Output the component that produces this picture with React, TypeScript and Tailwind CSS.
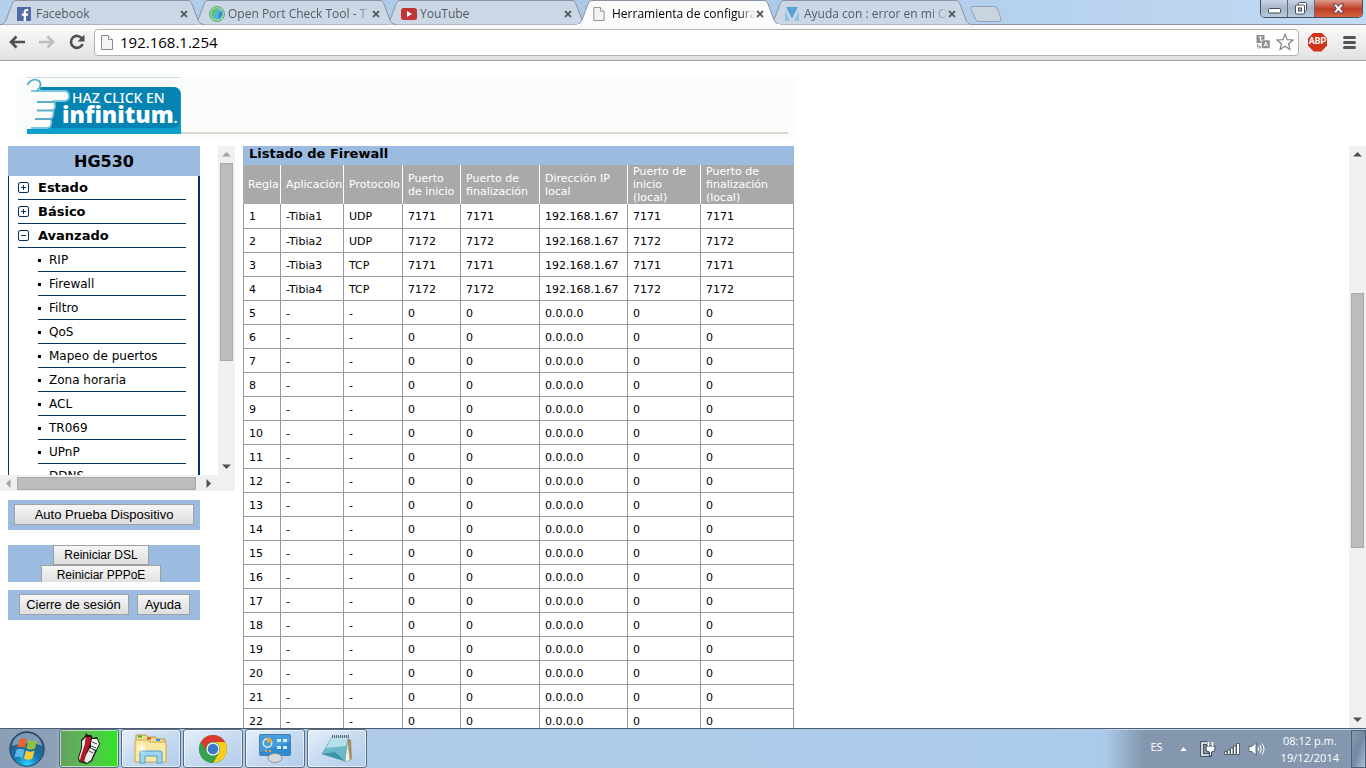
import { ReactNode } from "react";
import clsx from "clsx";
import { FaFacebookF } from "react-icons/fa";

type Tab = {
  title: string;
  icon: ReactNode;
  z: string;
  active?: boolean;
};

type Rule = {
  app: string;
  protocol: string;
  port: string;
  ip: string;
};

function PageIcon({ className }: { className?: string }) {
  return (
    <svg viewBox="0 0 12 15" className={className} aria-hidden="true">
      <path d="M0.5 0.5H7.5L11.5 4.5V14.5H0.5Z" fill="#f4f4f4" stroke="#8b8b8b" />
      <path d="M7.5 0.5V4.5H11.5" fill="#fff" stroke="#8b8b8b" />
    </svg>
  );
}

function FacebookIcon() {
  return (
    <span className="flex h-3.5 w-3.5 items-end justify-end bg-[#5069a8] text-white">
      <FaFacebookF size={12} />
    </span>
  );
}

function GlobeIcon() {
  return (
    <svg viewBox="0 0 16 16" className="h-4 w-4" aria-hidden="true">
      <circle cx="8" cy="8" r="7.5" fill="#9fdc9f" stroke="#5fae6c" />
      <circle cx="8" cy="8" r="5.8" fill="#58b7d9" />
      <path d="M3 5C5 2 8 2 10 3L8 6L5 8L6 11L4 12C2 10 2 7 3 5Z" fill="#62c178" />
      <path d="M10 6L13 5C14 8 13 11 10 13L9 10Z" fill="#3a8fc8" />
    </svg>
  );
}

function YoutubeIcon() {
  return (
    <svg viewBox="0 0 16 12" className="h-3 w-4" aria-hidden="true">
      <rect width="16" height="12" rx="2.5" fill="#c03636" />
      <path d="M6 3V9L11 6Z" fill="#fff" />
    </svg>
  );
}

function TriangleIcon() {
  return (
    <svg viewBox="0 0 13 13" className="h-3.5 w-3.5" aria-hidden="true">
      <path d="M1 0H12L6.5 11Z" fill="#56a3d8" />
      <path d="M0 3L4.5 13H0ZM13 3L8.5 13H13Z" fill="#8fc0e2" />
    </svg>
  );
}

const tabs: Tab[] = [
  { title: "Facebook", icon: <FacebookIcon />, z: "z-40" },
  { title: "Open Port Check Tool - T", icon: <GlobeIcon />, z: "z-30" },
  { title: "YouTube", icon: <YoutubeIcon />, z: "z-20" },
  {
    title: "Herramienta de configura",
    icon: <PageIcon className="h-3.5 w-3" />,
    z: "z-50",
    active: true,
  },
  { title: "Ayuda con : error en mi O", icon: <TriangleIcon />, z: "z-10" },
];

const submenu = [
  "RIP",
  "Firewall",
  "Filtro",
  "QoS",
  "Mapeo de puertos",
  "Zona horaria",
  "ACL",
  "TR069",
  "UPnP",
  "DDNS",
];

const rules: Rule[] = [
  { app: "-Tibia1", protocol: "UDP", port: "7171", ip: "192.168.1.67" },
  { app: "-Tibia2", protocol: "UDP", port: "7172", ip: "192.168.1.67" },
  { app: "-Tibia3", protocol: "TCP", port: "7171", ip: "192.168.1.67" },
  { app: "-Tibia4", protocol: "TCP", port: "7172", ip: "192.168.1.67" },
  ...Array.from({ length: 18 }, () => ({
    app: "-",
    protocol: "-",
    port: "0",
    ip: "0.0.0.0",
  })),
];

const columns = [
  { label: "Regla", width: "w-[38px]" },
  { label: "Aplicación", width: "w-[63px]" },
  { label: "Protocolo", width: "w-[59px]" },
  { label: "Puerto de inicio", width: "w-[58px]" },
  { label: "Puerto de finalización", width: "w-[79px]" },
  { label: "Dirección IP local", width: "w-[88px]" },
  { label: "Puerto de inicio (local)", width: "w-[73px]" },
  { label: "Puerto de finalización (local)", width: "w-[93px]" },
];

function BrowserTab({ tab }: { tab: Tab }) {
  return (
    <div
      className={clsx(
        "relative -mr-3.5 flex h-[25px] w-[206px] shrink-0 items-center pt-0.5 pr-4 pl-[17px]",
        tab.z
      )}
    >
      <svg viewBox="0 0 206 25" className="absolute inset-0 h-full w-full" aria-hidden="true">
        <path
          d="M1 24.5C4 24 5 22 6 20L12 4C13 1.5 14 0.5 17 0.5H187C190 0.5 191 1.5 192 4L198 20C199 22 200 24 204 24.5"
          fill={tab.active ? "#fbfbfb" : "#ccd7e5"}
          stroke="#8994a3"
        />
        {tab.active && <path d="M1 24.5H204" stroke="#fbfbfb" />}
      </svg>
      <span className="relative flex w-[19px] shrink-0">{tab.icon}</span>
      <span
        className={clsx(
          "relative w-[144px] text-xs whitespace-nowrap",
          tab.title.length > 20 &&
            "[mask-image:linear-gradient(to_right,#000_88%,transparent)]",
          tab.active ? "text-black" : "text-[#555b64]"
        )}
      >
        {tab.title}
      </span>
      <button type="button" aria-label="Cerrar pestaña" className="relative">
        <svg viewBox="0 0 8 8" className="h-2 w-2">
          <path d="M1 1L7 7M7 1L1 7" stroke="#5a5d63" strokeWidth="1.8" />
        </svg>
      </button>
    </div>
  );
}

function WindowButtons() {
  return (
    <div className="mr-[3px] ml-auto flex h-[18px] w-[103px] overflow-hidden rounded-b-[5px] border border-t-0 border-[#3f4d60]">
      <button
        type="button"
        aria-label="Minimizar"
        className="flex flex-1 items-center justify-center border-r border-[#5c6b80] bg-linear-to-b from-[#c9d5e4] via-[#a5b4c7] to-[#b9cbe0]"
      >
        <svg viewBox="0 0 13 6" className="mt-1 h-1.5 w-[13px]">
          <rect x="0.5" y="0.5" width="12" height="4.5" rx="1" fill="#fff" stroke="#454d5b" />
        </svg>
      </button>
      <button
        type="button"
        aria-label="Restaurar"
        className="flex flex-1 items-center justify-center border-r border-[#5c6b80] bg-linear-to-b from-[#c9d5e4] via-[#a5b4c7] to-[#b9cbe0]"
      >
        <svg viewBox="0 0 13 13" className="h-[13px] w-[13px]">
          <rect x="3.5" y="0.5" width="8" height="8" rx="1" fill="#fff" stroke="#454d5b" />
          <rect x="0.5" y="3" width="9" height="9" rx="1" fill="#fff" stroke="#454d5b" />
          <rect x="3.5" y="6" width="3" height="3" fill="#a5b4c7" stroke="#454d5b" />
        </svg>
      </button>
      <button
        type="button"
        aria-label="Cerrar"
        className="flex w-[47px] items-center justify-center bg-linear-to-b from-[#dd9a8c] via-[#bf3c26] to-[#d9633f]"
      >
        <svg viewBox="0 0 13 11" className="h-[11px] w-[13px]">
          <path
            d="M1 1H4.5L6.5 3.4L8.5 1H12L8.6 5.5L12 10H8.5L6.5 7.6L4.5 10H1L4.4 5.5Z"
            fill="#fff"
            stroke="#57384a"
          />
        </svg>
      </button>
    </div>
  );
}

function Toolbar() {
  return (
    <div className="flex h-9 shrink-0 items-center border-b border-[#a0a0a0] bg-linear-to-b from-[#fafafa] to-[#e2e2e2] pr-2 pb-px pl-2">
      <button type="button" aria-label="Atrás" className="mr-3">
        <svg viewBox="0 0 18 16" className="h-4 w-[18px]">
          <path d="M8.5 2.5L3 8L8.5 13.5M3 8H17" fill="none" stroke="#505050" strokeWidth="2.6" />
        </svg>
      </button>
      <button type="button" aria-label="Adelante" className="mr-3">
        <svg viewBox="0 0 18 16" className="h-4 w-[18px]">
          <path d="M9.5 2.5L15 8L9.5 13.5M15 8H1" fill="none" stroke="#bdbdbd" strokeWidth="2.6" />
        </svg>
      </button>
      <button type="button" aria-label="Recargar" className="mr-2">
        <svg viewBox="0 0 16 16" className="h-4 w-[18px]">
          <path d="M13 4.6A6 6 0 1 0 13.6 10" fill="none" stroke="#505050" strokeWidth="2.6" />
          <path d="M15.5 0.5V7.5H8.5Z" fill="#505050" />
        </svg>
      </button>
      <div className="flex h-[27px] flex-1 items-center rounded-sm border border-[#b3b3b3] bg-white pr-1 pl-1.5">
        <PageIcon className="mr-[7px] h-[15px] w-3" />
        <input
          type="text"
          aria-label="Dirección"
          defaultValue="192.168.1.254"
          className="min-w-0 flex-1 bg-transparent text-[15px] leading-5 text-black outline-none"
        />
        <button type="button" aria-label="Traducir" className="mr-1.5">
          <svg viewBox="0 0 14 14" className="h-3.5 w-3.5">
            <rect x="0.5" y="0" width="8" height="8" fill="#8c8c8c" />
            <path d="M2.5 2H6.5M4.5 2V6" stroke="#fff" />
            <rect x="5.5" y="5" width="8.5" height="8.5" fill="#8c8c8c" stroke="#fff" strokeWidth="0.6" />
            <path d="M8 11.5L9.8 7L11.6 11.5M8.6 10H11" fill="none" stroke="#fff" />
            <path d="M1.5 9V12H4.5M3 10.3L4.7 12L3 13.7" fill="none" stroke="#8c8c8c" />
          </svg>
        </button>
        <button type="button" aria-label="Marcador">
          <svg viewBox="0 0 20 20" className="h-5 w-[18px]">
            <path
              d="M10 1.5L12.4 7.4L18.8 7.8L13.9 11.9L15.5 18.2L10 14.7L4.5 18.2L6.1 11.9L1.2 7.8L7.6 7.4Z"
              fill="#fff"
              stroke="#808080"
              strokeWidth="1.3"
            />
          </svg>
        </button>
      </div>
      <button
        type="button"
        className="ml-[9px] flex h-[19px] w-[19px] items-center justify-center bg-[#d0351b] font-['Roboto',sans-serif] text-[9px] font-bold text-white [clip-path:polygon(30%_0,70%_0,100%_30%,100%_70%,70%_100%,30%_100%,0_70%,0_30%)]"
      >
        ABP
      </button>
      <button type="button" aria-label="Menú" className="mr-0.5 ml-4 flex w-[13px] flex-col gap-0.5">
        <span className="h-[3px] rounded-sm bg-[#555]" />
        <span className="h-[3px] rounded-sm bg-[#555]" />
        <span className="h-[3px] rounded-sm bg-[#555]" />
      </button>
    </div>
  );
}

function Arrow({ dir, muted }: { dir: "up" | "down" | "left" | "right"; muted?: boolean }) {
  const paths = {
    up: "M4.5 2L9 6.5H0Z",
    down: "M4.5 7L0 2.5H9Z",
    left: "M2 4.5L6.5 0V9Z",
    right: "M7 4.5L2.5 0V9Z",
  };
  return (
    <span className="flex h-[17px] w-[17px] shrink-0 items-center justify-center">
      <svg viewBox="0 0 9 9" className="h-[9px] w-[9px]" aria-hidden="true">
        <path d={paths[dir]} fill={muted ? "#a3a3a3" : "#505050"} />
      </svg>
    </span>
  );
}

function Banner() {
  return (
    <header className="mt-4 ml-4 flex h-[61px] w-[780px] items-start bg-[#fafcf9] pl-[11px] font-['Open_Sans',sans-serif]">
      <a href="#infinitum" className="relative block h-14 w-[154px] shrink-0 border-t border-[#cfdfee] pt-2">
        <svg viewBox="0 0 154 56" className="absolute inset-0 h-14 w-[154px]" aria-hidden="true">
          <path d="M0 9H146Q154 9 154 17V56H0Z" fill="#0aa0cb" />
          <path d="M14 9H146Q153 9 153 17V42Q153 50 145 50H14Z" fill="#0583b2" />
          <path d="M0 8H13V16H0Z" fill="#fafcf9" />
          <path
            d="M0 13H37Q42 13 42 18Q42 23 37 23H26Q28 24 28 28Q28 31 26 32Q27 33 26 37Q26 40 23 41Q25 42 24 46Q24 50 19 50H0Z"
            fill="#fafcf9"
            stroke="#7cc7de"
            strokeWidth="1.8"
          />
          <path d="M-2 12H4V51H-2Z" fill="#fafcf9" />
          <path d="M0 7C3 2 8 0 12 3C15 6 13 10 10 13" fill="none" stroke="#5bacc9" strokeWidth="1.8" />
          <path d="M10 24H27M10 32.500H26M8 41H24" stroke="#5bacc9" strokeWidth="2" />
        </svg>
        <span className="relative block pt-1 pl-[45px] font-['Noto_Sans',sans-serif] text-[14px] leading-4 font-medium whitespace-nowrap text-white">
          HAZ CLICK EN
        </span>
        <span className="relative block pl-[35px] text-[23px] leading-4 font-extrabold whitespace-nowrap text-white">
          infinitum<span className="text-xs">.</span>
        </span>
      </a>
      <div className="mr-2 h-[57px] flex-1 border-b-2 border-[#d8d6d2]" />
    </header>
  );
}

function ToggleIcon({ open }: { open?: boolean }) {
  return (
    <svg viewBox="0 0 11 11" className="h-[11px] w-[11px]" aria-hidden="true">
      <rect x="0.5" y="0.5" width="10" height="10" rx="1.5" fill="#fff" stroke="#003366" />
      <path d={open ? "M3 5.5H8" : "M3 5.5H8M5.5 3V8"} stroke="#003366" />
    </svg>
  );
}

function SideMenu() {
  return (
    <div className="h-[345px] w-[235px] bg-[#f0f0f0]">
      <div className="flex h-[329px]">
        <nav className="flex-1 overflow-hidden bg-white pl-2">
          <h1 className="h-[30px] w-48 bg-[#9bbbe1] text-center text-base leading-8 font-bold">
            HG530
          </h1>
          <ul className="w-48 border-r-2 border-l border-[#003366] pr-3 pl-[9px]">
            {["Estado", "Básico", "Avanzado"].map((item) => (
              <li key={item} className="h-6 border-b border-[#003366]">
                <a href={`#${item}`} className="flex items-center gap-[9px] text-[13px] leading-[23px] font-bold">
                  <ToggleIcon open={item === "Avanzado"} />
                  {item}
                </a>
              </li>
            ))}
            {submenu.map((item) => (
              <li key={item} className="ml-5 h-6 border-b border-[#003366]">
                <a href={`#${item}`} className="flex items-center gap-2 text-xs leading-6">
                  <span className="h-[3px] w-[3px] bg-black" />
                  {item}
                </a>
              </li>
            ))}
          </ul>
        </nav>
        <div className="flex w-[17px] flex-col">
          <Arrow dir="up" muted />
          <div className="mx-0.5 h-[198px] border border-[#a8a8a8] bg-[#bcbcbc]" />
          <div className="flex-1" />
          <Arrow dir="down" />
        </div>
      </div>
      <div className="flex h-4 items-center">
        <Arrow dir="left" muted />
        <div className="h-[13px] w-[179px] border border-[#a8a8a8] bg-[#bcbcbc]" />
        <span className="ml-1">
          <Arrow dir="right" />
        </span>
      </div>
    </div>
  );
}

function FormButton({ children, className }: { children: ReactNode; className?: string }) {
  return (
    <button
      type="button"
      className={clsx(
        "shrink-0 border border-[#a0a0a0] bg-linear-to-b from-[#f6f6f6] to-[#dedede] font-['Liberation_Sans',Arial,sans-serif] whitespace-nowrap text-black",
        className
      )}
    >
      {children}
    </button>
  );
}

function RulesTable() {
  return (
    <section className="w-[551px]">
      <h2 className="h-[19px] bg-[#9bbbe1] pl-1.5 text-[13px] leading-4 font-bold">
        Listado de Firewall
      </h2>
      <table className="w-[551px] table-fixed border-separate border-spacing-0 text-left text-[11px]">
        <thead>
          <tr>
            {columns.map((col) => (
              <th
                key={col.label}
                scope="col"
                className={clsx(
                  "h-[39px] border-r border-white bg-[#a9a9a9] py-0 pr-1 pl-[5px] leading-[13px] font-normal text-white last:border-[#a9a9a9]",
                  col.width
                )}
              >
                {col.label}
              </th>
            ))}
          </tr>
        </thead>
        <tbody>
          {rules.map((rule, i) => (
            <tr key={i} className={i === 0 ? "h-[25px]" : "h-6"}>
              {[
                i + 1,
                rule.app,
                rule.protocol,
                rule.port,
                rule.port,
                rule.ip,
                rule.port,
                rule.port,
              ].map((value, j) => (
                <td
                  key={j}
                  className="border-r border-b border-[#999] px-0 pt-0.5 pb-0 pl-[5px] leading-4 first:border-l"
                >
                  {value}
                </td>
              ))}
            </tr>
          ))}
        </tbody>
      </table>
    </section>
  );
}

function StartOrb() {
  return (
    <svg viewBox="0 0 36 36" className="h-9 w-9" aria-hidden="true">
      <defs>
        <radialGradient id="orb" cx="50%" cy="95%" r="85%">
          <stop offset="0" stopColor="#26d4ff" />
          <stop offset="0.45" stopColor="#1672ad" />
          <stop offset="1" stopColor="#32557c" />
        </radialGradient>
      </defs>
      <circle cx="18" cy="18" r="17.2" fill="url(#orb)" stroke="#263f5c" />
      <path d="M3 15C4 7 11 2 18 2S32 7 33 15C25 11 12 12 3 15Z" fill="#a9c0d6" opacity="0.65" />
      <path d="M11 8C13 7 15 7 18 8.5L16 17C13 15.5 11 15.5 8 16.5Z" fill="#ea6430" />
      <path d="M19.5 9C22 10.5 25 10.5 28 9L26 17.5C23 19 20 19 17.5 17.5Z" fill="#91c13f" />
      <path d="M7.5 18.5C10 17.5 13 17.5 15.5 19L13.5 27C11 25.5 8 25.5 5.5 26.5Z" fill="#5bb7ec" />
      <path d="M17 19.5C20 21 23 21 25.5 19.5L23.5 27.5C21 29 17 29 15 27.5Z" fill="#fbc934" />
    </svg>
  );
}

function MouseIcon() {
  return (
    <svg viewBox="0 0 32 34" className="h-[34px] w-8" aria-hidden="true">
      <path d="M8 8L12 4L13 1L15 3L18 3L20 6L24 5L27 12L25 16L19 29L14 32L6 30L5 26L8 16Z" fill="#1f1a1a" />
      <path d="M9 9L13 5L12 12L8 25L7 29L6 26L9 16Z" fill="#e8e8e8" />
      <path d="M13 5L18 5L17 12L12 24L10 30L7 29L8 24L12 13Z" fill="#c01425" />
      <path d="M19 7L24 7L26 12L23 18L18 16L18 11Z" fill="#f4f4f4" />
      <path d="M17 16L22 19L18 28L14 31L11 29L13 23Z" fill="#ececec" />
      <path d="M19 10L24 12M18 14L23 16M16 19L20 21" stroke="#444" />
    </svg>
  );
}

function ExplorerIcon() {
  return (
    <svg viewBox="0 0 34 32" className="h-8 w-[34px]" aria-hidden="true">
      <path d="M2 5V2H12L14 4H22V6H31V28H2Z" fill="#f5dd8b" stroke="#b99b45" />
      <path d="M2 7H13L16 9H32V29H1V8Z" fill="#f9e7a4" stroke="#c8a850" />
      <rect x="4" y="2.5" width="4" height="2" fill="#35b54a" />
      <rect x="13" y="4.5" width="4" height="2" fill="#d84635" />
      <rect x="22" y="6" width="4" height="2" fill="#2f92d8" />
      <path d="M6 30V20Q6 18 8 18H26Q28 18 28 20V30H23V23H11V30Z" fill="#9bd5f0" stroke="#4f9fcb" />
      <path d="M8 10V20M3 15H13M5 12L11 18M11 12L5 18" stroke="#fff" strokeWidth="0.9" />
    </svg>
  );
}

function ChromeIcon() {
  return (
    <svg viewBox="0 0 30 30" className="h-[30px] w-[30px]" aria-hidden="true">
      <circle cx="15" cy="15" r="14" fill="#2fa24a" />
      <path d="M2.9 8A14 14 0 0 1 27.1 8H15A7 7 0 0 0 8.9 18.5Z" fill="#dc3a30" />
      <path d="M27.1 8A14 14 0 0 1 15 29L21.1 18.5A7 7 0 0 0 15 8Z" fill="#fccd17" />
      <path d="M2.9 8A14 14 0 0 0 15 29L21.1 18.5A7 7 0 0 1 8.9 18.5Z" fill="#35a14b" />
      <circle cx="15" cy="15" r="6.6" fill="#f6f6f6" />
      <circle cx="15" cy="15" r="5.3" fill="#3a78c8" />
    </svg>
  );
}

function ControlPanelIcon() {
  return (
    <svg viewBox="0 0 32 29" className="h-[29px] w-8" aria-hidden="true">
      <rect x="0.5" y="0.5" width="31" height="21" rx="1" fill="#2e8ad0" stroke="#4c7fae" />
      <path d="M1 1H31V8L1 18Z" fill="#58aae4" opacity="0.6" />
      <circle cx="8.5" cy="9" r="4.2" fill="none" stroke="#e4f1fb" strokeWidth="1.4" />
      <path d="M8 8.5V3.5A5 5 0 0 1 13 8.5Z" fill="#f3a42d" />
      <path d="M18 6.5H22M24 6.5H28M18 13.5H22M24 13.5H28" stroke="#c8f2ff" strokeWidth="3" />
      <circle cx="7" cy="17" r="1.2" fill="#f3a42d" />
      <circle cx="11" cy="17" r="1.2" fill="#f3a42d" />
      <path d="M14 20H18V24H14Z" fill="#8a8f94" />
      <ellipse cx="16" cy="24" rx="7" ry="4.5" fill="#d5d8dc" stroke="#8d949c" />
    </svg>
  );
}

function NotepadIcon() {
  return (
    <svg viewBox="0 0 32 30" className="h-[30px] w-8" aria-hidden="true">
      <path d="M26 4L30 6L31 25L25 28Z" fill="#a98b58" />
      <path d="M26 3L29 26L24 28L22 20Z" fill="#f0f0ea" stroke="#92a0a6" strokeWidth="0.6" />
      <path d="M11 3H27L24 27L1 20Z" fill="#6cb9c9" stroke="#5994a5" strokeWidth="0.6" />
      <path d="M11 3H27L25 12L5 14Z" fill="#b7e1e8" />
      <path d="M24 27L1 20L14 18Z" fill="#3f94aa" />
      <path d="M11 2.5H28" stroke="#666e74" strokeWidth="3" strokeDasharray="1 1" />
    </svg>
  );
}

const taskbarApps = [
  { name: "Mouse", icon: <MouseIcon />, green: true },
  { name: "Explorador", icon: <ExplorerIcon /> },
  { name: "Chrome", icon: <ChromeIcon /> },
  { name: "Panel de control", icon: <ControlPanelIcon /> },
  { name: "Bloc de notas", icon: <NotepadIcon /> },
];

function Taskbar() {
  return (
    <footer className="flex h-10 shrink-0 items-center border-t border-[#4b5c70] bg-[#aecbe8] bg-linear-to-r from-[#8b9fb6] from-4% via-[#b1cce9] via-5% to-[#aac9ea]">
      <button type="button" aria-label="Inicio" className="mr-3.5 ml-[9px]">
        <StartOrb />
      </button>
      <div className="flex gap-0.5">
        {taskbarApps.map((app) => (
          <button
            key={app.name}
            type="button"
            aria-label={app.name}
            className={clsx(
              "flex h-[39px] w-15 items-center justify-center rounded-[3px] border border-[#5a6b80] ring-1 ring-white/60 ring-inset",
              app.green
                ? "bg-linear-to-r from-[#63a060] to-[#2fe31f]"
                : "bg-linear-to-br from-[#e6eff9] via-[#c7daf0] to-[#b3cdea]"
            )}
          >
            {app.icon}
          </button>
        ))}
      </div>
      <div className="ml-auto flex h-full items-center border-t border-[#c7d8ea] bg-linear-to-r from-transparent to-[#8497ae] to-15% pl-[45px] text-white">
        <span className="mr-4 mb-1 text-[11px]">ES</span>
        <button type="button" aria-label="Mostrar iconos ocultos" className="mr-3">
          <svg viewBox="0 0 9 6" className="h-1.5 w-[9px]">
            <path d="M4.5 0.5L8.5 5.5H0.5Z" fill="#fff" stroke="#5a6a7d" strokeWidth="0.5" />
          </svg>
        </button>
        <svg viewBox="0 0 16 16" className="mr-2 h-4 w-4" aria-hidden="true">
          <path d="M7 2H2V14H10V12" fill="none" stroke="#36424f" strokeWidth="3.5" />
          <path d="M7 2H2V14H10V12" fill="none" stroke="#fff" strokeWidth="1.6" />
          <path d="M6 5H15V8Q15 11 11.5 11V15H9.5V11Q6 11 6 8Z" fill="#fff" stroke="#36424f" />
          <path d="M8.5 1V5M12.5 1V5" stroke="#fff" strokeWidth="1.6" />
        </svg>
        <svg viewBox="0 0 16 14" className="mr-2 h-3.5 w-4" aria-hidden="true">
          <path
            d="M0.500 9.500H3V12.500H0.500ZM3.500 8H6V12.500H3.500ZM6.500 6H9V12.500H6.500ZM9.500 4H12V12.500H9.500ZM12.500 1.500H15.500V12.500H12.500Z"
            fill="#fff"
            stroke="#3c4957"
            strokeWidth="0.8"
          />
        </svg>
        <svg viewBox="0 0 17 16" className="mr-4 h-4 w-[17px]" aria-hidden="true">
          <path d="M1 5.5H4L8 1.5V14.5L4 10.5H1Z" fill="#fff" stroke="#4a5868" strokeWidth="0.8" />
          <path d="M10 6Q11.5 8 10 10M12 4Q14.5 8 12 12M14 2.5Q18 8 14 13.5" fill="none" stroke="#fff" />
        </svg>
        <div className="mr-3 text-center text-[11px] leading-[17px] whitespace-nowrap">
          <p>08:12 p.m.</p>
          <p>19/12/2014</p>
        </div>
        <button
          type="button"
          aria-label="Mostrar escritorio"
          className="h-full w-[15px] border border-[#4f6075] bg-linear-to-br from-[#8699b0] via-[#7388a2] to-[#a9c1dc]"
        />
      </div>
    </footer>
  );
}

export default function App() {
  return (
    <div className="flex h-screen flex-col overflow-hidden bg-white font-['Open_Sans','Noto_Sans',sans-serif] text-black">
      <div className="flex h-[25px] shrink-0 items-start border-b border-[#8994a3] bg-linear-to-r from-[#b5d0ec] via-[#a9c7e6] to-[#c3dbf3]">
        {tabs.map((tab) => (
          <BrowserTab key={tab.title} tab={tab} />
        ))}
        <button type="button" aria-label="Nueva pestaña" className="mt-1.5 ml-2.5">
          <svg viewBox="0 0 32 16" className="h-4 w-8">
            <path
              d="M3 0.5H24Q26.5 0.5 27.5 3L31 13Q31.5 15.5 29 15.5H9Q6.5 15.5 5.5 13L1 3Q0.5 0.5 3 0.5Z"
              fill="#c9d4e1"
              stroke="#93a0b0"
            />
          </svg>
        </button>
        <WindowButtons />
      </div>
      <Toolbar />

      <main className="flex min-h-0 flex-1 flex-col font-['DejaVu_Sans',Verdana,sans-serif]">
        <Banner />
        <div className="mt-2 flex min-h-0 flex-1">
          <aside className="w-[243px] shrink-0">
            <SideMenu />
            <div className="mt-[9px] ml-2 flex h-[30px] w-48 justify-center bg-[#9bbbe1] pt-1">
              <FormButton className="h-[21px] w-45 text-[13px]">Auto Prueba Dispositivo</FormButton>
            </div>
            <div className="mt-[15px] ml-2 flex h-[37px] w-48 flex-col items-center overflow-hidden bg-[#9bbbe1] pr-1.5">
              <FormButton className="h-5 w-24 text-xs">Reiniciar DSL</FormButton>
              <FormButton className="h-5 w-30 text-xs">Reiniciar PPPoE</FormButton>
            </div>
            <div className="mt-2 ml-2 flex h-[30px] w-48 justify-center gap-2 bg-[#9bbbe1] pt-1">
              <FormButton className="h-[21px] w-[110px] text-[13px]">Cierre de sesión</FormButton>
              <FormButton className="h-[21px] w-[53px] text-[13px]">Ayuda</FormButton>
            </div>
          </aside>
          <div className="min-w-0 flex-1 overflow-hidden">
            <RulesTable />
          </div>
          <div className="flex w-[17px] flex-col bg-[#f0f0f0]">
            <Arrow dir="up" />
            <div className="mx-0.5 mt-[130px] h-[255px] border border-[#a8a8a8] bg-[#bcbcbc]" />
            <div className="flex-1" />
            <Arrow dir="down" />
          </div>
        </div>
      </main>
      <Taskbar />
    </div>
  );
}
